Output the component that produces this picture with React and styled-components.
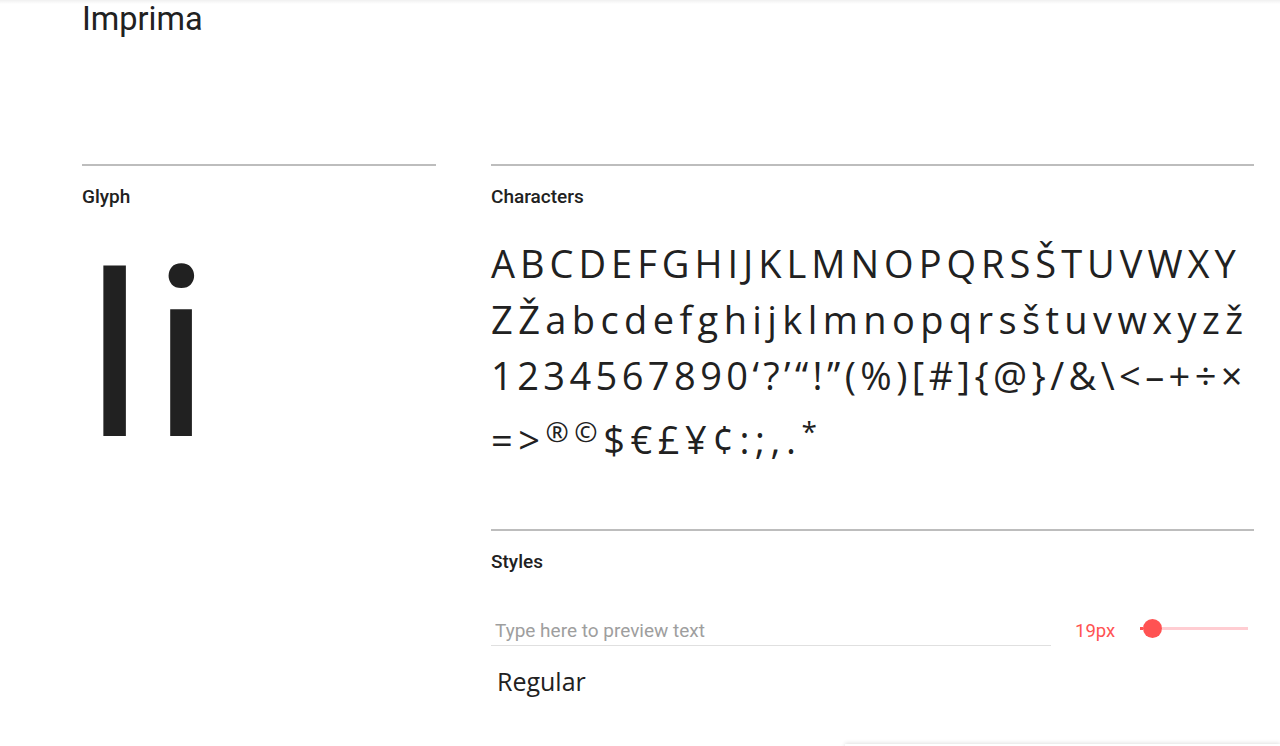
import React, { useState } from "react";
import styled, { createGlobalStyle } from "styled-components";

const GlobalStyle = createGlobalStyle`
	html, body {
		margin: 0;
		padding: 0;
		background: #ffffff;
		overflow: hidden;
	}
	body {
		font-family: Roboto, "Liberation Sans", Arial, sans-serif;
		color: rgba(0, 0, 0, 0.87);
	}
`;

const Page = styled.div`
	position: relative;
	width: 1280px;
	height: 746px;
	overflow: hidden;
	box-sizing: border-box;
	padding: 0 26px 0 82px;

	&::before {
		content: "";
		position: absolute;
		top: 0;
		left: 0;
		right: 0;
		height: 4px;
		background: linear-gradient(rgba(0, 0, 0, 0.06), rgba(0, 0, 0, 0));
	}
`;

const Title = styled.h1`
	margin: 0;
	padding-top: 1px;
	font-size: 32.5px;
	font-weight: 400;
	line-height: 36px;
	color: #212121;
	height: 163px;
`;

const Columns = styled.div`
	display: grid;
	grid-template-columns: 354px 763px;
	column-gap: 55px;
`;

const Section = styled.section`
	border-top: 2px solid #bdbdbd;
	padding-top: 21px;
	margin-bottom: ${(p) => p.$gap || 0}px;
`;

const Label = styled.h2`
	margin: 0;
	font-size: 19px;
	font-weight: 500;
	line-height: 20px;
	color: #212121;
`;

const GlyphBox = styled.div`
	font-family: Roboto, "Open Sans", sans-serif;
	font-size: 239px;
	line-height: 238px;
	color: #212121;
	margin-top: 28px;
	letter-spacing: 5px;
`;

const CharGrid = styled.div`
	margin-top: 28px;
	font-family: "Open Sans", "Noto Sans", sans-serif;
	font-size: 38px;
	line-height: 56px;
	color: #212121;
`;

const CharRow = styled.div`
	display: flex;
	justify-content: space-between;
	align-items: baseline;
	width: ${(p) => p.$width}px;
	white-space: nowrap;
`;

const Sup = styled.span`
	font-size: 28px;
	vertical-align: 12px;
`;

const PreviewRow = styled.div`
	display: flex;
	align-items: center;
	margin-top: 43px;
`;

const PreviewInput = styled.input`
	width: 560px;
	box-sizing: border-box;
	border: none;
	border-bottom: 1px solid #e0e0e0;
	padding: 4px 4px 3px;
	font-family: Roboto, "Liberation Sans", sans-serif;
	font-size: 19px;
	color: #212121;
	outline: none;
	background: transparent;

	&::placeholder {
		color: #9e9e9e;
	}
`;

const SizeValue = styled.span`
	margin-left: 24px;
	width: 61px;
	font-size: 18.5px;
	color: #ff5252;
`;

const Slider = styled.div`
	display: flex;
	align-items: center;
	width: 108px;
	height: 20px;
	margin-left: 4px;
	margin-top: -4px;
`;

const TrackPart = styled.div`
	height: 3px;
	flex: ${(p) => (p.$grow ? 1 : "none")};
	background: ${(p) => (p.$active ? "#ff5252" : "#ffcdd2")};
`;

const Thumb = styled.div`
	flex: none;
	width: 19px;
	height: 19px;
	border-radius: 50%;
	background: #ff5252;
`;

const Sample = styled.p`
	margin: 20px 0 0 6px;
	font-family: "Open Sans", "Noto Sans", sans-serif;
	font-size: 25px;
	line-height: 30px;
	color: #212121;
`;

const BottomSheet = styled.div`
	position: absolute;
	left: 845px;
	right: 0;
	top: 744px;
	height: 60px;
	background: #ffffff;
	box-shadow: 0 -1px 4px rgba(0, 0, 0, 0.12);
`;

const raised = new Set(["®", "©", "*"]);

const rows = [
	{ width: 745, chars: "ABCDEFGHIJKLMNOPQRSŠTUVWXY" },
	{ width: 752, chars: "ZŽabcdefghijklmnopqrsštuvwxyzž" },
	{ width: 752, chars: "1234567890‘?’“!”(%)[#]{@}/&\\<–+÷×" },
	{ width: 326, chars: "=>®©$€£¥¢:;,.*" },
];

export default function App() {
	const [text, setText] = useState("");
	const size = 19;
	const filled = 3;

	return (
		<>
			<GlobalStyle />
			<Page>
				<Title>Imprima</Title>
				<Columns>
					<Section>
						<Label>Glyph</Label>
						<GlyphBox>Ii</GlyphBox>
					</Section>
					<div>
						<Section $gap={62}>
							<Label>Characters</Label>
							<CharGrid>
								{rows.map((row) => (
									<CharRow key={row.chars} $width={row.width}>
										{Array.from(row.chars).map((c, i) => (
											<span key={i}>{raised.has(c) ? <Sup>{c}</Sup> : c}</span>
										))}
									</CharRow>
								))}
							</CharGrid>
						</Section>
						<Section>
							<Label>Styles</Label>
							<PreviewRow>
								<PreviewInput
									placeholder="Type here to preview text"
									value={text}
									onChange={(e) => setText(e.target.value)}
								/>
								<SizeValue>{size}px</SizeValue>
								<Slider>
									<TrackPart $active style={{ width: filled }} />
									<Thumb />
									<TrackPart $grow />
								</Slider>
							</PreviewRow>
							<Sample>{text || "Regular"}</Sample>
						</Section>
					</div>
				</Columns>
				<BottomSheet />
			</Page>
		</>
	);
}
